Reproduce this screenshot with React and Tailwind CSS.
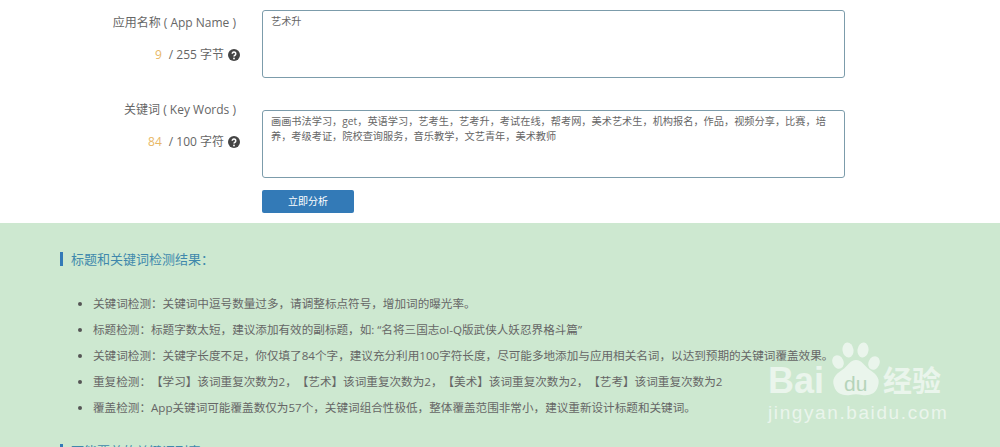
import React from "react";

const cjk = {
  fontFamily: '"Open Sans", "Noto Sans CJK SC", sans-serif',
  textSpacingTrim: "space-all",
};

const results = [
  "关键词检测：关键词中逗号数量过多，请调整标点符号，增加词的曝光率。",
  "标题检测：标题字数太短，建议添加有效的副标题，如: “名将三国志ol-Q版武侠人妖忍界格斗篇”",
  "关键词检测：关键字长度不足，你仅填了84个字，建议充分利用100字符长度，尽可能多地添加与应用相关名词，以达到预期的关键词覆盖效果。",
  "重复检测：【学习】该词重复次数为2，【艺术】该词重复次数为2，【美术】该词重复次数为2，【艺考】该词重复次数为2",
  "覆盖检测：App关键词可能覆盖数仅为57个，关键词组合性极低，整体覆盖范围非常小，建议重新设计标题和关键词。",
];

const FieldRow = ({ label, count, limit, value, className, labelClass }) => (
  <div className={`flex ${className}`}>
    <div className={`w-[262px] shrink-0 pr-[22px] text-right text-[12px] text-[#666] ${labelClass}`}>
      <div className="pr-[4px] leading-[18px]">{label}</div>
      <div className="mt-[14px] flex items-center justify-end gap-[3px] leading-[18px]">
        <span className="mr-[4px] text-[#e8b765]">{count}</span>
        <span>/ {limit}</span>
        <svg viewBox="0 0 24 24" className="ml-[1px] h-[12px] w-[12px]">
          <circle cx="12" cy="12" r="12" fill="#444" />
          <path d="M8.5 9.5a3.5 3.5 0 1 1 5.4 3c-1.3.8-1.9 1.3-1.9 2.5" fill="none" stroke="#fff" strokeWidth="3" />
          <circle cx="12" cy="19" r="1.8" fill="#fff" />
        </svg>
      </div>
    </div>
    <textarea
      readOnly
      defaultValue={value}
      className="h-[68px] w-[583px] resize-none rounded-[3px] border border-[#7c9cab] bg-white px-[8px] py-[3px] text-[10.2px] leading-[15px] text-[#666] outline-none"
      style={cjk}
    />
  </div>
);

const Heading = ({ children }) => (
  <h3 className="flex items-center text-[13px] leading-[18px] font-normal text-[#4088ac]">
    <span className="mr-[8px] h-[14px] w-[3px] bg-[#337ab7]" />
    {children}
  </h3>
);

const Watermark = () => (
  <div className="absolute top-0 left-0 text-[#eaf5ec]">
    <svg viewBox="0 0 50 56" className="absolute top-[342px] left-[831px] h-[56px] w-[50px]" fill="#eaf5ec">
      <ellipse cx="7" cy="20" rx="5.5" ry="7" transform="rotate(-25 7 20)" />
      <ellipse cx="17" cy="8" rx="5.5" ry="7.5" transform="rotate(-8 17 8)" />
      <ellipse cx="32" cy="8" rx="5.5" ry="7.5" transform="rotate(8 32 8)" />
      <ellipse cx="43" cy="21" rx="5.5" ry="7" transform="rotate(25 43 21)" />
      <path d="M25 18c-6 0-8 6-14 10C3 33 1 38 3 44c2 8 10 10 16 9 4-1 8-1 12 0 7 1 14-1 16-9 2-6 0-11-8-16-6-4-8-10-14-10z" />
    </svg>
    <span
      className="absolute top-[360px] left-[768px] text-[36px] leading-[42px] font-bold whitespace-nowrap"
      style={{ fontFamily: '"Liberation Sans", sans-serif' }}
    >
      Bai
    </span>
    <span
      className="absolute top-[371px] left-[844px] text-[21px] leading-[26px] whitespace-nowrap text-[#b5d4ba]"
      style={{ fontFamily: '"Liberation Sans", sans-serif' }}
    >
      du
    </span>
    <span className="absolute top-[360px] left-[883px] text-[29px] leading-[42px] font-bold whitespace-nowrap" style={cjk}>
      经验
    </span>
    <span
      className="absolute top-[401px] left-[768px] text-[19px] leading-[24px] tracking-[1.6px] whitespace-nowrap"
      style={{ fontFamily: '"Liberation Sans", sans-serif' }}
    >
      jingyan.baidu.com
    </span>
  </div>
);

const App = () => (
  <div className="relative h-[447px] w-[1000px] overflow-hidden bg-white" style={cjk}>
    <div className="h-[223px] pt-[10px]">
      <FieldRow labelClass="pt-[4px]" label="应用名称 ( App Name )" count="9" limit="255 字节" value="艺术升" />
      <FieldRow
        className="mt-[32px]"
        labelClass="-mt-[9px]"
        label="关键词 ( Key Words )"
        count="84"
        limit="100 字符"
        value="画画书法学习，get，英语学习，艺考生，艺考升，考试在线，帮考网，美术艺术生，机构报名，作品，视频分享，比赛，培养，考级考证，院校查询服务，音乐教学，文艺青年，美术教师"
      />
      <div className="mt-[12px] pl-[262px]">
        <button className="block h-[23px] w-[92px] rounded-[2px] bg-[#337ab7] text-[10px] text-white">立即分析</button>
      </div>
    </div>
    <div className="h-[224px] bg-[#cde8d0] pt-[27px] pl-[60px]">
      <Heading>标题和关键词检测结果：</Heading>
      <ul className="mt-[23px] list-disc pl-[33px] text-[11.6px] leading-[26px] text-[#666] marker:text-[#555]">
        {results.map((item) => (
          <li key={item}>{item}</li>
        ))}
      </ul>
      <div className="mt-[21px]">
        <Heading>可能覆盖的关键词列表</Heading>
      </div>
    </div>
    <Watermark />
  </div>
);

export default App;
